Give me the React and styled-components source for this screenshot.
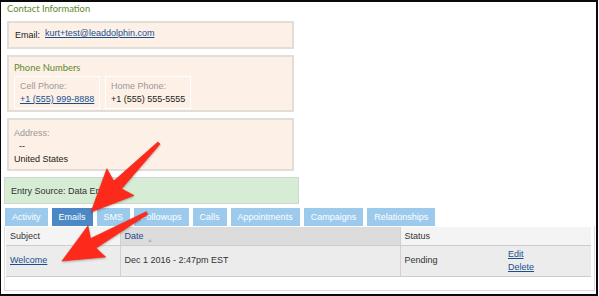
import React from 'react';
import styled, { createGlobalStyle } from 'styled-components';

const GlobalStyle = createGlobalStyle`
  html, body {
    margin: 0;
    padding: 0;
    background: #fff;
  }
  body {
    font-family: "Liberation Sans", Arial, sans-serif;
    font-size: 9px;
    color: #222;
  }
`;

const Frame = styled.div`
  position: relative;
  box-sizing: border-box;
  width: 598px;
  height: 296px;
  border: 2px solid #0a0a0a;
  border-left-width: 1px;
  padding: 1px 0 0 3px;
  overflow: hidden;
  background: #fff;
`;

const Contact = styled.div`
  width: 295px;
`;

const Title = styled.div`
  font-family: Lato, "Open Sans", sans-serif;
  font-size: 9.4px;
  color: #5f8a2c;
  height: 18px;
  line-height: 12px;
  padding-left: 3px;
`;

const InfoBox = styled.div`
  box-sizing: border-box;
  margin: 0 5px 6px 3px;
  height: ${(p) => p.$h}px;
  background: #fdf0e6;
  border: 2px solid #e3ddd8;
  padding: 0 5px;
  overflow: hidden;
`;

const EmailRow = styled.div`
  display: flex;
  align-items: center;
  gap: 5px;
  height: 100%;
  padding-left: 1px;
`;

const Link = styled.a`
  color: #1a4f8e;
  text-decoration: underline;
  cursor: pointer;
  white-space: nowrap;
  position: relative;
  top: ${(p) => p.$raise || 0}px;
`;

const SubTitle = styled.div`
  font-family: Lato, "Open Sans", sans-serif;
  font-size: 9.4px;
  color: #5f8a2c;
  margin: 5px 0 2px 0;
  line-height: 12px;
`;

const PhoneRow = styled.div`
  display: flex;
  gap: 5px;
`;

const PhoneBox = styled.div`
  box-sizing: border-box;
  width: 86px;
  height: 33px;
  border: 1px solid #fff;
  padding: 3px 0 0 5px;
  line-height: 13px;
  white-space: nowrap;
`;

const Label = styled.div`
  color: #999;
`;

const AddressLines = styled.div`
  padding-top: 7px;
  line-height: 13px;
`;

const Dash = styled.div`
  padding-left: 5px;
`;

const EntrySource = styled.div`
  box-sizing: border-box;
  height: 27px;
  margin-bottom: 4px;
  background: #d6ecd4;
  border: 1px solid #cfd8ce;
  padding-left: 6px;
  display: flex;
  align-items: center;
  color: #333;
`;

const Tabs = styled.div`
  display: flex;
  gap: 4px;
  padding-left: 1px;
`;

const Tab = styled.div`
  height: 18px;
  line-height: 18px;
  padding: 0 7px;
  color: #fff;
  background: ${(p) => (p.$active ? '#4b88c6' : '#9ccaed')};
  font-size: 9px;
`;

const TablePanel = styled.div`
  box-sizing: border-box;
  width: 591px;
  height: 65px;
  border: 1px solid #dcdcdc;
  border-top: none;
  padding: 1px 3px 0 1px;
`;

const Table = styled.table`
  width: 100%;
  table-layout: fixed;
  border-collapse: collapse;
  font-size: 9px;
`;

const Th = styled.th`
  box-sizing: border-box;
  text-align: left;
  font-weight: normal;
  height: 18px;
  padding: 0 4px;
  background: ${(p) => (p.$sorted ? '#dcdcdc' : '#f4f4f4')};
  color: ${(p) => (p.$sorted ? '#1f4a85' : '#333')};
  border-bottom: 1px solid #cdcdcd;
  border-right: ${(p) => (p.$sep ? '1px solid #d0d0d0' : 'none')};
  width: ${(p) => (p.$w ? `${p.$w}px` : 'auto')};
  position: relative;
`;

const SortMark = styled.span`
  position: absolute;
  left: 27px;
  top: 12px;
  width: 0;
  height: 0;
  border-left: 2.5px solid transparent;
  border-right: 2.5px solid transparent;
  border-bottom: 3px solid #b5b5b5;
`;

const Td = styled.td`
  height: 30px;
  padding: 0 4px;
  background: #ececec;
  color: #333;
  border-bottom: 1px solid #cdcdcd;
  border-right: ${(p) => (p.$sep ? '1px solid #d0d0d0' : 'none')};
  line-height: 13px;
  vertical-align: middle;
  white-space: nowrap;
`;

const Overlay = styled.svg`
  position: absolute;
  left: -1px;
  top: -2px;
  pointer-events: none;
  overflow: visible;
`;

function arrowPoints(tail, tip, headLen, headHalf, tailHalf, neckHalf) {
  const dx = tip[0] - tail[0];
  const dy = tip[1] - tail[1];
  const len = Math.hypot(dx, dy);
  const ux = dx / len;
  const uy = dy / len;
  const px = -uy;
  const py = ux;
  const base = [tip[0] - ux * headLen, tip[1] - uy * headLen];
  const wing = [base[0] - ux * 4, base[1] - uy * 4];
  const pts = [
    [tail[0] + px * tailHalf, tail[1] + py * tailHalf],
    [base[0] + px * neckHalf, base[1] + py * neckHalf],
    [wing[0] + px * headHalf, wing[1] + py * headHalf],
    tip,
    [wing[0] - px * headHalf, wing[1] - py * headHalf],
    [base[0] - px * neckHalf, base[1] - py * neckHalf],
    [tail[0] - px * tailHalf, tail[1] - py * tailHalf],
  ];
  return pts.map((p) => `${p[0].toFixed(1)},${p[1].toFixed(1)}`).join(' ');
}

const arrows = [
  { tail: [159, 143], tip: [91, 212], head: 38, half: 19 },
  { tail: [147, 213], tip: [62, 261], head: 36, half: 18 },
];

const tabs = ['Activity', 'Emails', 'SMS', 'Followups', 'Calls', 'Appointments', 'Campaigns', 'Relationships'];

const App = () => {
  return (
    <>
      <GlobalStyle />
      <Frame>
        <Contact>
          <Title>Contact Information</Title>
          <InfoBox $h={28}>
            <EmailRow>
              <span>Email:</span>
              <Link $raise={-2}>kurt+test@leaddolphin.com</Link>
            </EmailRow>
          </InfoBox>
          <InfoBox $h={57}>
            <SubTitle>Phone Numbers</SubTitle>
            <PhoneRow>
              <PhoneBox>
                <Label>Cell Phone:</Label>
                <Link>+1 (555) 999-8888</Link>
              </PhoneBox>
              <PhoneBox>
                <Label>Home Phone:</Label>
                <div>+1 (555) 555-5555</div>
              </PhoneBox>
            </PhoneRow>
          </InfoBox>
          <InfoBox $h={53}>
            <AddressLines>
              <Label>Address:</Label>
              <Dash>--</Dash>
              <div>United States</div>
            </AddressLines>
          </InfoBox>
          <EntrySource>Entry Source: Data Entry</EntrySource>
        </Contact>
        <Tabs>
          {tabs.map((t) => (
            <Tab key={t} $active={t === 'Emails'}>
              {t}
            </Tab>
          ))}
        </Tabs>
        <TablePanel>
          <Table>
            <thead>
              <tr>
                <Th $w={114} $sep>Subject</Th>
                <Th $w={280} $sorted $sep>
                  Date
                  <SortMark />
                </Th>
                <Th $w={104}>Status</Th>
                <Th />
              </tr>
            </thead>
            <tbody>
              <tr>
                <Td $sep>
                  <Link>Welcome</Link>
                </Td>
                <Td $sep>Dec 1 2016 - 2:47pm EST</Td>
                <Td>Pending</Td>
                <Td>
                  <div>
                    <Link>Edit</Link>
                  </div>
                  <div>
                    <Link>Delete</Link>
                  </div>
                </Td>
              </tr>
            </tbody>
          </Table>
        </TablePanel>
        <Overlay width="599" height="296" viewBox="0 0 599 296">
          <defs>
            <filter id="shadow" x="-20%" y="-20%" width="140%" height="140%">
              <feDropShadow dx="0" dy="1" stdDeviation="1" floodColor="#000" floodOpacity="0.3" />
            </filter>
          </defs>
          {arrows.map((a, i) => (
            <polygon
              key={i}
              points={arrowPoints(a.tail, a.tip, a.head, a.half, 1.5, 5.5)}
              fill="#fd2c1c"
              stroke="#e52212"
              strokeWidth="0.6"
              strokeLinejoin="round"
              filter="url(#shadow)"
            />
          ))}
        </Overlay>
      </Frame>
    </>
  );
};

export default App;
